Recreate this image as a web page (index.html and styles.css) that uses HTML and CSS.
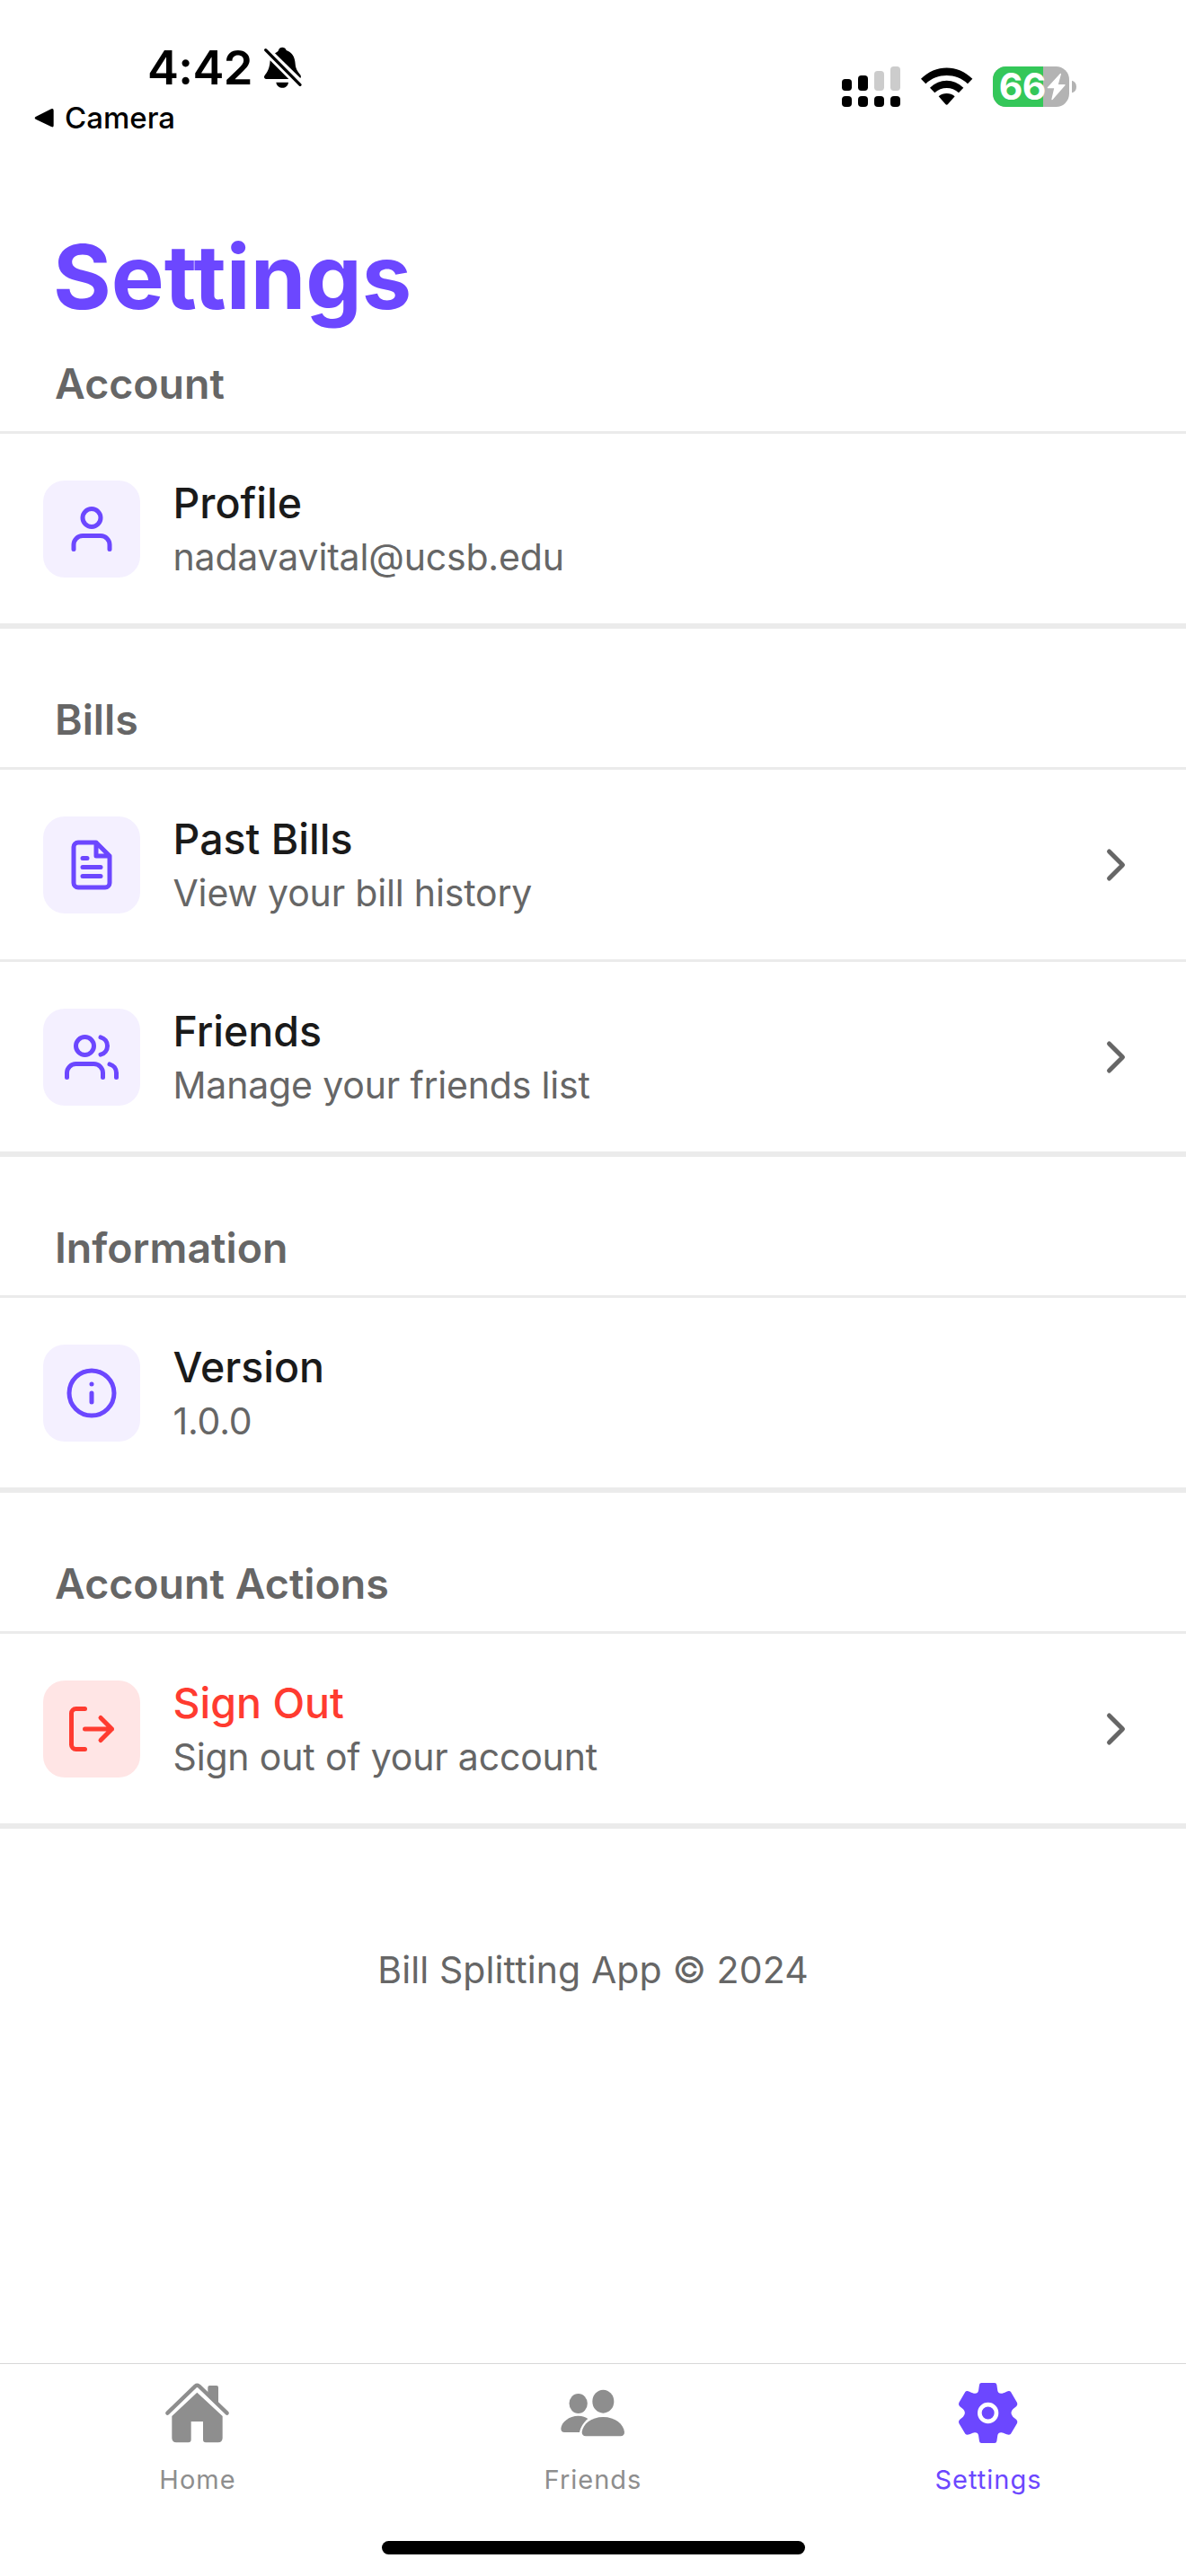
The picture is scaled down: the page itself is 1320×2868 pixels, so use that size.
FILE: index.html
```html
<!DOCTYPE html>
<html lang="en">
<head>
<meta charset="utf-8">
<title>Settings</title>
<link rel="stylesheet" href="styles.css">
</head>
<body>
<div class="screen">
  <header class="status">
    <div class="status-left">
      <div class="clock">
        <span class="time">4:42</span>
        <svg class="bell" viewBox="879 63 132 144" aria-hidden="true">
          <path d="M918 88C924 84 928 82 930 78C933 65 952 65 956 78C975 85 985 100 986 124C987 145 1000 155 1004 162Q1006 168 1003 171Z"/>
          <path d="M902 112L964 174H889Q881 173 882 166C884 158 900 150 902 112Z"/>
          <path d="M922 185H963C961 197 953 203 943 203S924 197 922 185Z"/>
          <path class="slash" d="M887 77L1002 193"/>
        </svg>
      </div>
      <div class="back">
        <svg class="back-arrow" viewBox="114 270 69 69" aria-hidden="true"><path d="M119 300L171 274Q179 271 179 279V329Q179 337 171 333L119 308Q113 304 119 300Z"/></svg>
        <span>Camera</span>
      </div>
    </div>
    <div class="status-right">
      <svg class="signal" viewBox="108 69 201 141" aria-hidden="true">
        <rect x="111" y="114" width="33" height="39" rx="11"/>
        <rect x="165" y="102" width="33" height="51" rx="11"/>
        <rect class="off" x="219" y="87" width="33" height="66" rx="11"/>
        <rect class="off" x="273" y="72" width="33" height="81" rx="11"/>
        <rect x="111" y="171" width="33" height="36" rx="12"/>
        <rect x="165" y="171" width="33" height="36" rx="12"/>
        <rect x="219" y="171" width="33" height="36" rx="12"/>
        <rect x="273" y="171" width="33" height="36" rx="12"/>
      </svg>
      <svg class="wifi" viewBox="372 69 177 141" aria-hidden="true">
        <path d="M375 113C424 64 498 64 547 113L531 130C492 93 430 93 391 130Z"/>
        <path d="M405 143C437 111 485 111 517 143L501 160C479 139 443 139 421 160Z"/>
        <path d="M434 172C449 159 473 159 488 172L465 198Q461 203 457 198Z"/>
      </svg>
      <svg class="battery" viewBox="612 69 285 141" aria-hidden="true">
        <defs><clipPath id="cell"><rect x="615" y="72" width="255" height="135" rx="44"/></clipPath></defs>
        <g clip-path="url(#cell)">
          <rect class="empty" x="615" y="72" width="255" height="135"/>
          <rect class="charge" x="615" y="72" width="168" height="135"/>
        </g>
        <path class="empty" d="M879 119Q894 124 894 140T879 160Z"/>
        <text class="level" x="635" y="184">66</text>
        <path class="bolt" d="M841 97L799 143H822L813 182L855 134H831Z"/>
      </svg>
    </div>
  </header>

  <main class="content">
    <h1 class="page-title">Settings</h1>

    <section class="group">
      <h2 class="group-title">Account</h2>
      <div class="row">
        <span class="tile"><svg class="icon" viewBox="0 0 24 24" aria-hidden="true"><path d="M20 21v-2a4 4 0 0 0-4-4H8a4 4 0 0 0-4 4v2"/><circle cx="12" cy="7" r="4"/></svg></span>
        <div class="label"><div class="name">Profile</div><div class="detail">nadavavital@ucsb.edu</div></div>
      </div>
    </section>

    <section class="group">
      <h2 class="group-title">Bills</h2>
      <div class="row">
        <span class="tile"><svg class="icon" viewBox="0 0 24 24" aria-hidden="true"><path d="M14 2H6a2 2 0 0 0-2 2v16a2 2 0 0 0 2 2h12a2 2 0 0 0 2-2V8zM14 2v6h6M16 13H8M16 17H8M10 9H8"/></svg></span>
        <div class="label"><div class="name">Past Bills</div><div class="detail">View your bill history</div></div>
        <svg class="icon chevron" viewBox="0 0 24 24" aria-hidden="true"><path d="M9 18l6-6-6-6"/></svg>
      </div>
      <div class="row">
        <span class="tile"><svg class="icon" viewBox="0 0 24 24" aria-hidden="true"><path d="M17 21v-2a4 4 0 0 0-4-4H5a4 4 0 0 0-4 4v2M23 21v-2a4 4 0 0 0-3-3.87M16 3.13a4 4 0 0 1 0 7.75"/><circle cx="9" cy="7" r="4"/></svg></span>
        <div class="label"><div class="name">Friends</div><div class="detail">Manage your friends list</div></div>
        <svg class="icon chevron" viewBox="0 0 24 24" aria-hidden="true"><path d="M9 18l6-6-6-6"/></svg>
      </div>
    </section>

    <section class="group">
      <h2 class="group-title">Information</h2>
      <div class="row">
        <span class="tile"><svg class="icon" viewBox="0 0 24 24" aria-hidden="true"><circle cx="12" cy="12" r="10"/><path d="M12 16v-4M12 8h.01"/></svg></span>
        <div class="label"><div class="name">Version</div><div class="detail">1.0.0</div></div>
      </div>
    </section>

    <section class="group">
      <h2 class="group-title">Account Actions</h2>
      <div class="row danger">
        <span class="tile"><svg class="icon" viewBox="0 0 24 24" aria-hidden="true"><path d="M9 21H5a2 2 0 0 1-2-2V5a2 2 0 0 1 2-2h4M16 17l5-5-5-5M21 12H9"/></svg></span>
        <div class="label"><div class="name">Sign Out</div><div class="detail">Sign out of your account</div></div>
        <svg class="icon chevron" viewBox="0 0 24 24" aria-hidden="true"><path d="M9 18l6-6-6-6"/></svg>
      </div>
    </section>

    <p class="copyright">Bill Splitting App © 2024</p>
  </main>

  <nav class="tabbar">
    <div class="tabs">
      <div class="tab">
        <svg class="tab-icon" viewBox="30 63 240 240" aria-hidden="true">
          <path class="roof" d="M49 185L142 95Q148 90 155 95L248 185"/>
          <path d="M184 118V99q0-6 6-6h23q6 0 6 6V156Z"/>
          <path d="M148 116L233 195V268Q233 283 218 283H177Q168 283 168 274V213H128V274Q128 283 119 283H79Q64 283 64 268V195Z"/>
        </svg>
        <span>Home</span>
      </div>
      <div class="tab">
        <svg class="tab-icon" viewBox="1350 63 240 240" aria-hidden="true">
          <ellipse cx="1421" cy="153" rx="30.5" ry="33"/>
          <ellipse cx="1504" cy="146" rx="36" ry="39"/>
          <path d="M1375 249Q1363 249 1363 236C1365 215 1390 194 1421 194C1435 194 1446 198 1453 204C1440 214 1429 231 1425 249Z"/>
          <path d="M1446 262Q1433 261 1433 248C1436 222 1464 198 1504 198S1572 222 1575 248Q1575 261 1562 262Z"/>
        </svg>
        <span>Friends</span>
      </div>
      <div class="tab active">
        <svg class="tab-icon" viewBox="120 63 240 240" aria-hidden="true">
          <path d="M217 84H261Q267 84 268 90L271 110Q273 120 284 119Q288 119 301 113Q311 109 315 114L336 150Q339 156 334 162L322 172Q310 184.500 322 197L334 207Q339 213 336 219L315 254Q311 259 301 256Q288 250 284 250Q273 249 271 259L268 279Q267 285 261 285H217Q211 285 210 279L207 259Q205 249 194 250Q190 250 177 256Q167 259 163 254L142 219Q139 213 144 207L156 197Q168 184.500 156 172L144 162Q139 156 142 150L163 114Q167 109 177 113Q190 119 194 119Q205 120 207 110L210 90Q211 84 217 84Z"/>
          <circle class="hub" cx="239" cy="184.500" r="28"/>
        </svg>
        <span>Settings</span>
      </div>
    </div>
    <div class="home-indicator"></div>
  </nav>
</div>
</body>
</html>
```
FILE: styles.css
```css
* { box-sizing: border-box; }

body {
  margin: 0;
  background: #fff;
  font-family: Inter, "Liberation Sans", sans-serif;
  color: #1a1a1a;
}

svg { display: block; flex: none; }

.screen {
  display: flex;
  flex-direction: column;
  width: 1320px;
  height: 2868px;
  overflow: hidden;
}

/* Status bar */
.status {
  display: flex;
  justify-content: space-between;
  height: 248px;
  padding: 42px 121px 0 38px;
  color: #000;
}

.clock { display: flex; align-items: flex-start; padding-left: 126px; }
.time {
  width: 129px;
  font-size: 52.5px;
  font-weight: 600;
  line-height: 66px;
  letter-spacing: -0.66px;
}
.bell { width: 44px; height: 48px; margin-top: 9px; }
.slash { fill: none; stroke: #000; stroke-width: 10; stroke-linecap: round; }

.back {
  display: flex;
  align-items: center;
  gap: 11px;
  margin-top: 3px;
  font-size: 33px;
  font-weight: 500;
  line-height: 40px;
}
.back-arrow { width: 23px; height: 23px; }

.status-right { display: flex; align-items: flex-start; gap: 21px; padding-top: 31px; }
.signal { width: 67px; height: 47px; }
.signal .off { fill: #ccc; }
.wifi { width: 59px; height: 47px; }
.battery { width: 95px; height: 47px; }
.empty { fill: #b3b3b3; }
.charge { fill: #34c759; }
.level { fill: #fff; font-size: 123px; font-weight: 700; letter-spacing: -1.9px; }
.bolt { fill: #fff; stroke: #fff; stroke-width: 4; stroke-linejoin: round; }

/* Settings list */
.content { flex: 1; }

.page-title {
  margin: 0 0 30px;
  padding-left: 59px;
  color: #6c47ff;
  font-size: 99px;
  font-weight: 700;
  line-height: 120px;
}

.group { border-bottom: 6px solid #ebebeb; }

.group-title {
  margin: 0;
  padding: 72px 61px 24px;
  color: #666;
  font-size: 46.5px;
  font-weight: 600;
  line-height: 58px;
}
.page-title + .group .group-title { padding-top: 0; }

.row {
  display: flex;
  align-items: center;
  gap: 36.5px;
  height: 214px;
  padding: 48px 48px 47px;
  border-top: 3px solid #ebebeb;
}

.tile {
  display: flex;
  align-items: center;
  justify-content: center;
  flex: none;
  width: 108px;
  height: 108px;
  border-radius: 24px;
  background: #f4f0ff;
  color: #6c47ff;
}

.icon {
  width: 60px;
  height: 60px;
  fill: none;
  stroke: currentColor;
  stroke-width: 2;
  stroke-linecap: round;
  stroke-linejoin: round;
}
.chevron { color: #666; }

.label { flex: 1; }
.name { font-size: 46.5px; font-weight: 500; line-height: 58px; }
.detail {
  margin-top: 4px;
  color: #666;
  font-size: 41px;
  line-height: 54px;
  letter-spacing: -0.17px;
}

.danger .tile { background: #ffe5e5; color: #ff3b30; }
.danger .name { color: #ff3b30; }

.copyright {
  margin: 127px 0 0;
  color: #666;
  font-size: 41px;
  line-height: 60px;
  letter-spacing: 0.11px;
  text-align: center;
}

/* Bottom navigation */
.tabbar {
  display: flex;
  flex-direction: column;
  align-items: center;
  justify-content: space-between;
  height: 237px;
  padding: 14px 0 24px;
  border-top: 1px solid #d8d8d8;
}
.tabs { display: flex; align-self: stretch; }
.tab {
  display: flex;
  flex: 1;
  flex-direction: column;
  align-items: center;
  gap: 17px;
  color: #8e8e8e;
  font-size: 29px;
  line-height: 36px;
  letter-spacing: 1px;
}
.tab.active { color: #6c47ff; }
.tab-icon { width: 80px; height: 80px; fill: currentColor; }
.roof { fill: none; stroke: currentColor; stroke-width: 13; stroke-linecap: round; }
.hub { fill: none; stroke: #fff; stroke-width: 14; }

.home-indicator { width: 471px; height: 15px; border-radius: 8px; background: #000; }
```
